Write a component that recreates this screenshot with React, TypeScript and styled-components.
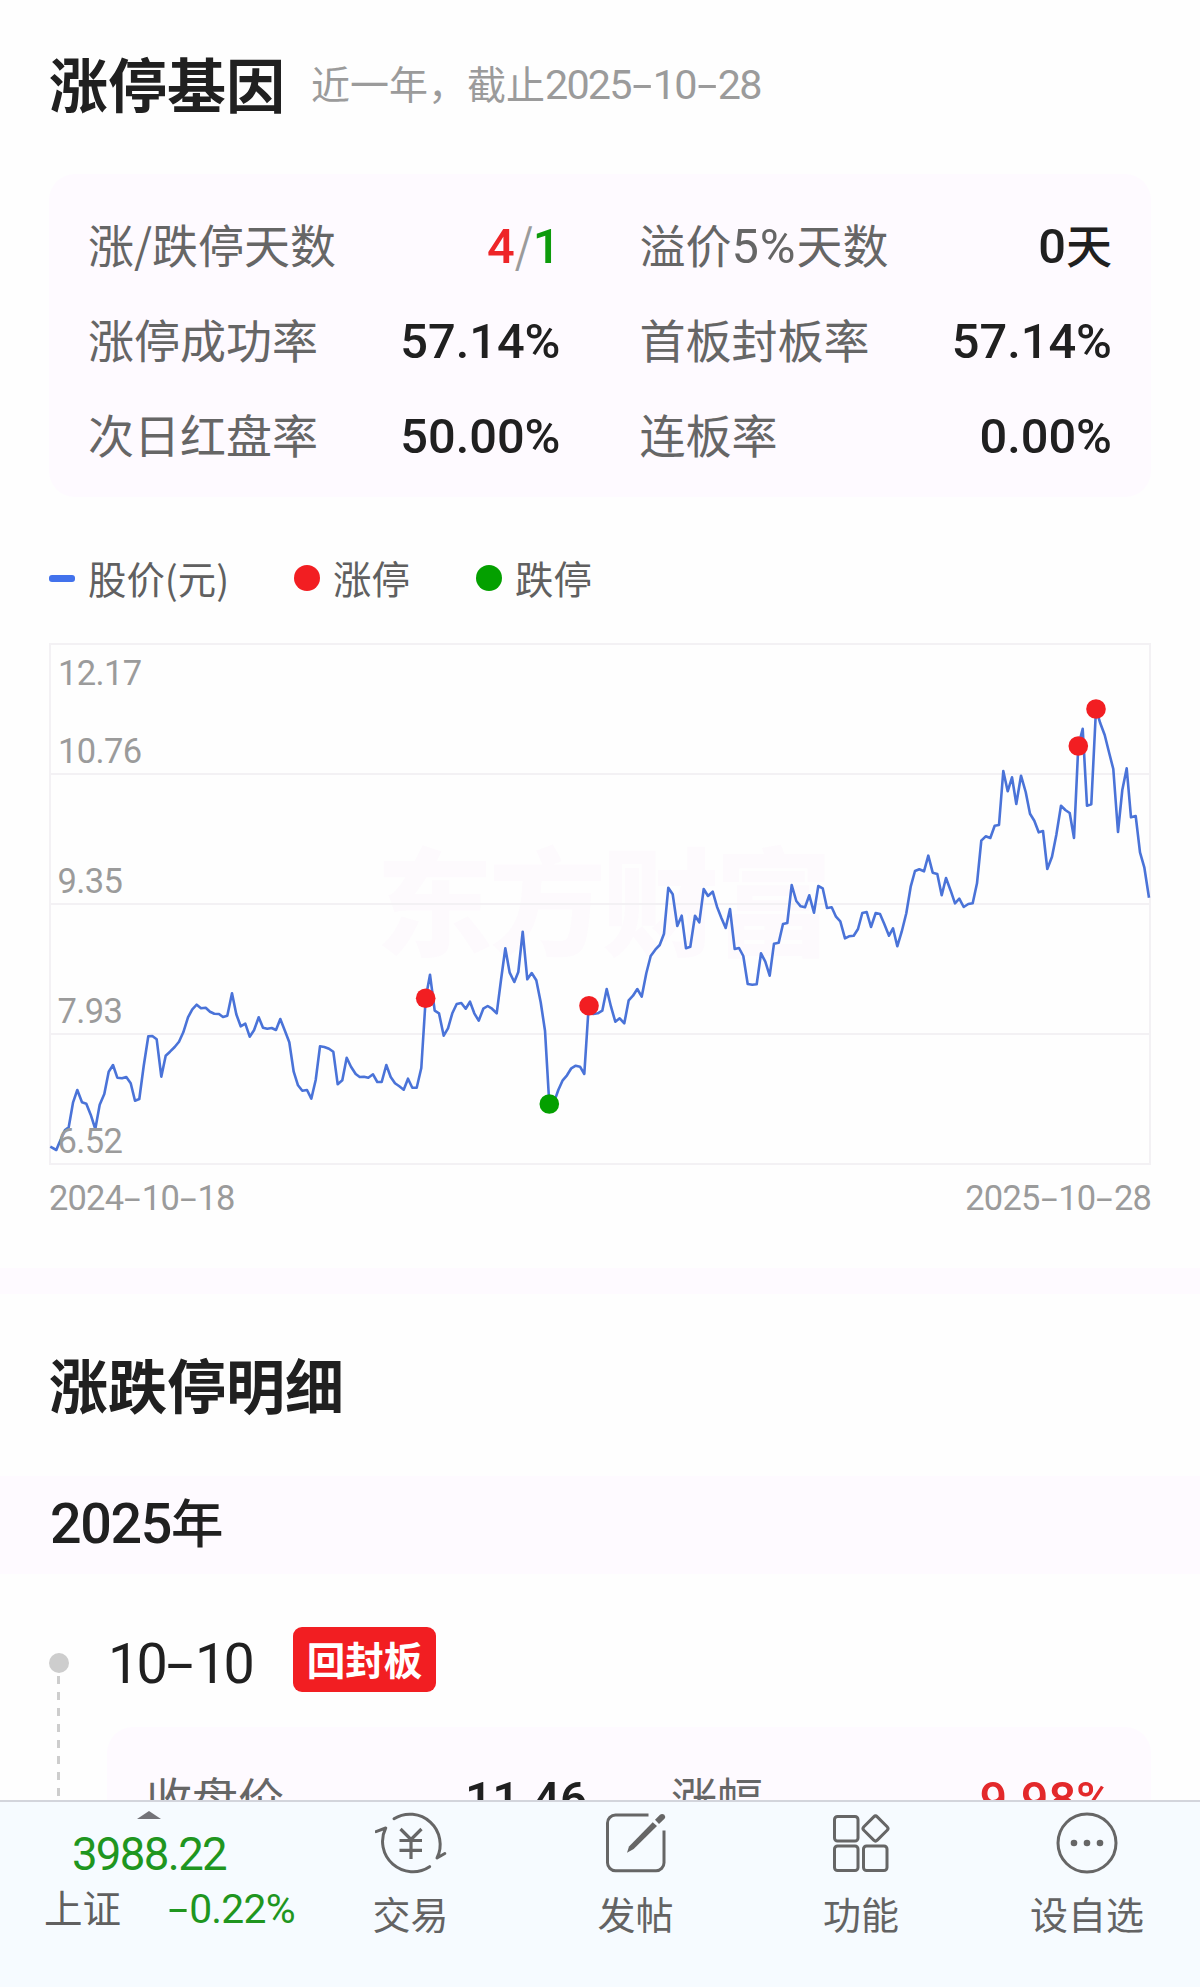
import React from 'react';
import styled, { createGlobalStyle } from 'styled-components';

const RED = '#f21e22';
const GREEN = '#04a000';

const GlobalStyle = createGlobalStyle`
  * { box-sizing: border-box; }
  body {
    margin: 0;
    background: #fefefe;
    color: #202020;
    font-family: 'Noto Sans CJK SC', 'Noto Sans', sans-serif;
  }
`;

const Page = styled.div`
  display: flex;
  flex-direction: column;
  width: 1200px;
  height: 1987px;
  overflow: hidden;
`;

const Content = styled.main`
  flex: 1;
  min-height: 0;
  overflow: hidden;
`;

const Inset = styled.section`
  padding: 0 49px;
`;

/* ---- numerals ---- */

const Digits = styled.span<{ $tight?: number }>`
  font-family: Roboto, sans-serif;
  font-size: 1.06em;
  line-height: 0;
  letter-spacing: ${(p) => p.$tight ?? 0}em;
`;

const Dash = styled.span`
  display: inline-block;
  width: 0.54em;
  text-align: center;
  letter-spacing: 0;
  transform: scaleX(1.75);
`;

function Num({ children, tight }: { children: string; tight?: number }) {
  return (
    <Digits $tight={tight}>
      {children.split(/(-)/).map((part, i) => (part === '-' ? <Dash key={i}>-</Dash> : part))}
    </Digits>
  );
}

/* ---- header ---- */

const Header = styled.header`
  display: flex;
  align-items: center;
  gap: 26px;
  height: 174px;
  padding-bottom: 6px;
  line-height: 1;
`;

const Title = styled.h1`
  margin: 0;
  padding-bottom: 4px;
  font-size: 59px;
  font-weight: 700;
  line-height: 1;
`;

const Subtitle = styled.span`
  padding-bottom: 4px;
  font-size: 39px;
  color: #9b9b9b;
  white-space: nowrap;
`;

/* ---- stat cards ---- */

const StatCard = styled.div<{ $gap?: number }>`
  display: grid;
  grid-template-columns: 1fr 1fr;
  grid-auto-rows: 95px;
  column-gap: ${(p) => p.$gap ?? 79}px;
  height: 323px;
  padding: 21px 39px 0;
  border-radius: 26px;
  background: #fefaff;
`;

const Stat = styled.div`
  display: flex;
  align-items: center;
  justify-content: space-between;
  line-height: 1;
  white-space: nowrap;
`;

const StatLabel = styled.span`
  font-size: 46px;
  color: #666;
`;

const StatValue = styled.span<{ $color?: string }>`
  font-size: 46px;
  font-weight: 500;
  color: ${(p) => p.$color ?? '#202020'};
`;

const Tint = styled.span<{ $color: string; $weight?: number }>`
  color: ${(p) => p.$color};
  font-weight: ${(p) => p.$weight ?? 500};
`;

/* ---- legend and chart ---- */

const Legend = styled.div`
  display: flex;
  align-items: center;
  height: 146px;
  padding-top: 16px;
`;

const LegendItem = styled.div<{ $width: number }>`
  display: flex;
  align-items: center;
  gap: 13px;
  width: ${(p) => p.$width}px;
  font-size: 38.4px;
  line-height: 1;
  color: #606060;
  white-space: nowrap;
`;

const LegendText = styled.span`
  padding-bottom: 2px;
`;

const Dot = styled.i<{ $color: string }>`
  width: 26px;
  height: 26px;
  border-radius: 50%;
  background: ${(p) => p.$color};
`;

const LineMark = styled.i`
  width: 26px;
  height: 7px;
  border-radius: 3px;
  background: #4272ec;
`;

const ChartSvg = styled.svg`
  display: block;
`;

const AxisText = styled.text`
  font: 400 34.5px Roboto, sans-serif;
  letter-spacing: -0.6px;
  fill: #9b9b9b;
`;

const Watermark = styled.text`
  font: 900 117px 'Noto Sans CJK SC', sans-serif;
  letter-spacing: -4px;
  fill: #fdfafd;
`;

const Dates = styled.div`
  display: flex;
  justify-content: space-between;
  align-items: center;
  height: 64px;
  margin-bottom: 39px;
  padding-top: 2px;
  font-size: 32.5px;
  line-height: 1;
  color: #9b9b9b;
`;

// Coordinates are [x, y] inside the 1102 x 522 plot, split by stretch of the year.
const scaled = (ox: number, oy: number, raw: number[]) => {
  const out: string[] = [];
  for (let i = 0; i < raw.length; i += 2) {
    out.push(`${(ox + raw[i] / 3).toFixed(1)},${(oy + raw[i + 1] / 3).toFixed(1)}`);
  }
  return out;
};

const PRICE_LINE = [
  ...scaled(-9, 317, [
    31, 560, 49, 570, 58, 548, 75, 510, 86, 502, 99, 428, 112, 390, 126, 427, 139, 431, 152, 464, 166, 507, 179, 434,
    193, 402, 206, 335, 219, 315, 232, 353, 246, 355, 259, 351, 272, 370, 285, 422, 298, 417, 311, 318, 325, 229, 337,
    228, 350, 238, 364, 350, 377, 287, 390, 275, 404, 261, 417, 245, 430, 217, 444, 172, 457, 148, 470, 134, 483, 145,
    497, 143, 510, 155, 523, 161, 537, 162, 549, 171, 562, 167, 576, 100, 589, 163, 602, 199, 616, 191, 629, 230, 642,
    211, 656, 172, 669, 203, 682, 206, 695, 204, 708, 210, 721, 177, 735, 213, 748, 247, 761, 335, 774, 376, 787, 392,
    801, 390, 814, 416, 827, 360,
  ]),
  ...scaled(241, 297, [
    90, 319, 103, 321, 117, 326, 130, 335, 143, 433, 157, 421, 170, 353, 183, 380, 197, 402, 209, 411, 222, 410, 235,
    413, 249, 403, 262, 426, 275, 426, 289, 375, 302, 411, 315, 430, 328, 439, 341, 449, 354, 416, 367, 443, 380, 443,
    394, 384, 407, 175, 420, 104, 434, 212, 447, 220, 461, 287, 474, 265, 487, 220, 500, 192, 514, 189, 527, 206, 540,
    185, 553, 220, 566, 242, 580, 206, 593, 198, 606, 206, 620, 220, 633, 120, 646, 25, 659, 98, 673, 126, 685, 96,
    698, -25, 712, 118, 725, 99, 739, 121, 752, 187, 765, 272, 778, 492, 798, 470, 805, 450, 818, 421, 831, 406, 844,
    385, 857, 377, 870, 380, 883, 402, 896, 198, 910, 222, 923, 220,
  ]),
  ...scaled(551, 197, [
    7, 512, 20, 447, 33, 500, 46, 545, 59, 535, 73, 550, 86, 481, 99, 467, 112, 447, 125, 470, 139, 400, 152, 348, 166,
    329, 179, 315, 192, 281, 205, 143, 218, 163, 232, 258, 245, 227, 258, 325, 271, 320, 285, 227, 298, 247, 311, 147,
    324, 168, 338, 155, 351, 200, 364, 233, 377, 264, 390, 207, 404, 327, 417, 324, 430, 348, 443, 432, 457, 434, 470,
    433, 483, 340, 496, 365, 509, 407, 522, 311, 536, 308, 549, 252, 562, 249, 575, 135, 589, 183, 602, 199, 615, 202,
    628, 166, 642, 218, 655, 138, 668, 145, 681, 204, 695, 202, 708, 230, 721, 244, 735, 295, 747, 289, 761, 287, 774,
    267, 787, 219, 800, 216, 813, 261, 827, 219, 840, 222, 853, 252, 867, 287, 879, 265, 892, 319, 905, 275, 919, 220,
    932, 140, 945, 93, 958, 88, 972, 94,
  ]),
  ...scaled(831, 17, [
    145, 587, 158, 638, 172, 642, 185, 706, 198, 654, 212, 692, 225, 730, 238, 716, 251, 741, 265, 732, 278, 730, 291,
    670, 304, 542, 317, 529, 331, 534, 344, 497, 357, 495, 370, 333, 383, 394, 396, 352, 409, 432, 423, 347, 437, 396,
    450, 461, 463, 482, 476, 517, 489, 513, 502, 627, 516, 590, 529, 525, 543, 437, 556, 450, 569, 459, 582, 534, 595,
    258, 608, 206, 621, 437, 634, 433, 648, 147, 661, 190, 674, 225, 687, 277, 700, 327, 714, 516, 727, 390, 740, 325,
    753, 472, 767, 468, 780, 577, 793, 622, 807, 713,
  ]),
].join(' ');

const AXIS: [string, number, number][] = [
  ['12.17', 9, 42],
  ['10.76', 9, 120],
  ['9.35', 8.5, 250],
  ['7.93', 8.5, 380],
  ['6.52', 8.5, 510],
];

const EVENTS: [number, number, string][] = [
  [376.7, 355.3, RED],
  [540, 362.7, RED],
  [500.3, 461, GREEN],
  [1029.3, 103, RED],
  [1047, 66, RED],
];

function PriceChart() {
  return (
    <ChartSvg width="1102" height="522" viewBox="0 0 1102 522">
      <Watermark x="327" y="304">
        东方财富
      </Watermark>
      <g fill="none" stroke="#f3f1f4" strokeWidth="2">
        <rect x="1" y="1" width="1100" height="520" />
        <path d="M1 131H1101M1 261H1101M1 391H1101" />
      </g>
      <polyline points={PRICE_LINE} fill="none" stroke="#4a73d8" strokeWidth="2.6" strokeLinejoin="round" />
      {EVENTS.map(([x, y, c]) => (
        <circle key={x} cx={x} cy={y} r="9.8" fill={c} />
      ))}
      {AXIS.map(([t, x, y]) => (
        <AxisText key={t} x={x} y={y}>
          {t}
        </AxisText>
      ))}
    </ChartSvg>
  );
}

/* ---- detail list ---- */

const Divider = styled.div`
  height: 26px;
  background: #fefaff;
`;

const SectionHead = styled.div`
  display: flex;
  align-items: center;
  height: 182px;
  padding-left: 49px;
`;

const YearBar = styled.div`
  display: flex;
  align-items: center;
  height: 98px;
  padding: 0 0 10px 50px;
  background: #fefaff;
  font-size: 52.5px;
  font-weight: 500;
  line-height: 1;
`;

const Entry = styled.article`
  display: flex;
  padding: 53px 49px 0;
`;

const Rail = styled.div`
  display: flex;
  flex-direction: column;
  align-items: center;
  width: 20px;
  margin-right: 38px;
  padding-top: 26px;
`;

const RailDot = styled.i`
  width: 20px;
  height: 20px;
  border-radius: 50%;
  background: #cdcdcd;
`;

const RailLine = styled.i`
  flex: 1;
  width: 3px;
  margin: 3px 1px 0 0;
  background: repeating-linear-gradient(#cdcdcd 0 8px, transparent 8px 16px);
`;

const EntryBody = styled.div`
  flex: 1;
`;

const EntryHead = styled.div`
  display: flex;
  align-items: center;
  height: 65px;
  margin-bottom: 35px;
`;

const EntryDate = styled.div`
  width: 186px;
  padding: 2px 0 0 1px;
  font-size: 52.5px;
  font-weight: 400;
  line-height: 1;
`;

const Badge = styled.span`
  display: flex;
  align-items: center;
  justify-content: center;
  width: 143px;
  height: 65px;
  padding-bottom: 2px;
  border-radius: 9px;
  background: ${RED};
  color: #fff;
  font-size: 38.5px;
  font-weight: 700;
  line-height: 1;
`;

/* ---- bottom bar ---- */

const BottomBar = styled.footer`
  display: grid;
  grid-template-columns: 298px 225px 225px 226px 226px;
  height: 187px;
  border-top: 2px solid #d3d5dc;
  background: #f6fbff;
`;

const IndexCell = styled.div`
  display: flex;
  flex-direction: column;
  align-items: center;
  padding-top: 9px;
  line-height: 1;
  white-space: nowrap;
`;

const Caret = styled.i`
  border: 12px solid transparent;
  border-top-width: 0;
  border-bottom: 8px solid #737378;
`;

const IndexPrice = styled.div`
  margin-top: 11px;
  font-size: 43px;
  color: #1f961f;
`;

const IndexRow = styled.div`
  display: flex;
  align-items: center;
  gap: 46px;
  margin-top: 14px;
  padding-left: 41px;
  font-size: 38.5px;
  color: #606060;
`;

const NavItem = styled.button`
  display: flex;
  flex-direction: column;
  align-items: center;
  gap: 15px;
  padding: 5px 0 0;
  border: 0;
  background: none;
  color: #636363;
  font: 400 38px/1 'Noto Sans CJK SC', sans-serif;
`;

const NavIcon = styled.svg.attrs({
  width: 72,
  height: 72,
  viewBox: '0 0 72 72',
  fill: 'none',
  stroke: '#666',
  strokeWidth: 3,
  strokeLinecap: 'round',
  strokeLinejoin: 'round',
})`
  display: block;
`;

function Row({ label, children, color }: { label: React.ReactNode; children: React.ReactNode; color?: string }) {
  return (
    <Stat>
      <StatLabel>{label}</StatLabel>
      <StatValue $color={color}>{children}</StatValue>
    </Stat>
  );
}

export default function App() {
  return (
    <Page>
      <GlobalStyle />
      <Content>
        <Inset>
          <Header>
            <Title>涨停基因</Title>
            <Subtitle>
              近一年，截止<Num tight={-0.045}>2025-10-28</Num>
            </Subtitle>
          </Header>
          <StatCard>
            <Row label="涨/跌停天数">
              <Tint $color="#ee2528">
                <Num>4</Num>
              </Tint>
              <Tint $color="#9b9b9b" $weight={400}>
                /
              </Tint>
              <Tint $color="#0e9b0c">
                <Num>1</Num>
              </Tint>
            </Row>
            <Row
              label={
                <>
                  溢价<Num tight={0.02}>5%</Num>天数
                </>
              }
            >
              <Num>0</Num>天
            </Row>
            <Row label="涨停成功率">
              <Num>57.14%</Num>
            </Row>
            <Row label="首板封板率">
              <Num>57.14%</Num>
            </Row>
            <Row label="次日红盘率">
              <Num>50.00%</Num>
            </Row>
            <Row label="连板率">
              <Num>0.00%</Num>
            </Row>
          </StatCard>
          <Legend>
            <LegendItem $width={245}>
              <LineMark />
              <LegendText>股价(元)</LegendText>
            </LegendItem>
            <LegendItem $width={182}>
              <Dot $color={RED} />
              <LegendText>涨停</LegendText>
            </LegendItem>
            <LegendItem $width={182}>
              <Dot $color={GREEN} />
              <LegendText>跌停</LegendText>
            </LegendItem>
          </Legend>
          <PriceChart />
          <Dates>
            <Num tight={-0.023}>2024-10-18</Num>
            <Num tight={-0.023}>2025-10-28</Num>
          </Dates>
        </Inset>
        <Divider />
        <SectionHead>
          <Title as="h2">涨跌停明细</Title>
        </SectionHead>
        <YearBar>
          <span>
            <Num tight={-0.025}>2025</Num>年
          </span>
        </YearBar>
        <Entry>
          <Rail>
            <RailDot />
            <RailLine />
          </Rail>
          <EntryBody>
            <EntryHead>
              <EntryDate>
                <Num tight={-0.05}>10-10</Num>
              </EntryDate>
              <Badge>回封板</Badge>
            </EntryHead>
            <StatCard $gap={84}>
              <Row label="收盘价">
                <Num tight={-0.01}>11.46</Num>
              </Row>
              <Row label="涨幅" color="#e3282b">
                <Num>9.98%</Num>
              </Row>
            </StatCard>
          </EntryBody>
        </Entry>
      </Content>
      <BottomBar>
        <IndexCell>
          <Caret />
          <IndexPrice>
            <Num tight={-0.036}>3988.22</Num>
          </IndexPrice>
          <IndexRow>
            上证
            <Tint $color="#1f961f" $weight={400}>
              <Num tight={-0.018}>-0.22%</Num>
            </Tint>
          </IndexRow>
        </IndexCell>
        <NavItem>
          <NavIcon>
            <path d="M19 11.700A30.300 30.300 0 0 1 62 51L69.800 46.500" />
            <path d="M54.600 59.700A30.300 30.300 0 0 1 10.700 21L1 24.600" />
            <path strokeLinecap="butt" strokeWidth="3.200" d="M25.500 22L36 32.500L46.500 22M36 32V52M24.500 33.500H47M24.500 43.300H47" />
          </NavIcon>
          交易
        </NavItem>
        <NavItem>
          <NavIcon>
            <path strokeLinecap="butt" d="M48.500 8H15.500a8 8 0 0 0-8 8v39.700a8 8 0 0 0 8 8h40.500a8 8 0 0 0 8-8V23.500" />
            <path d="M27 45.800L29 39.500L52.700 15.200L57 19L33.700 42Z" fill="#666" stroke="none" />
            <path d="M55 12.800L60 7.800Q62 6 64.300 7.800Q66 9.800 64.500 11.800L59 17Z" fill="#666" stroke="none" />
          </NavIcon>
          发帖
        </NavItem>
        <NavItem>
          <NavIcon>
            <rect x="9.500" y="9.500" width="23.500" height="24.500" rx="3" />
            <rect x="9.500" y="39" width="23.500" height="24.500" rx="3" />
            <rect x="38.500" y="39" width="23.500" height="24.500" rx="3" />
            <rect x="41" y="12" width="19" height="19" rx="2.500" transform="rotate(45 50.500 21.500)" />
          </NavIcon>
          功能
        </NavItem>
        <NavItem>
          <NavIcon>
            <circle cx="36" cy="36" r="29" />
            <g fill="#666" stroke="none">
              <circle cx="23" cy="36" r="3.300" />
              <circle cx="36" cy="36" r="3.300" />
              <circle cx="49" cy="36" r="3.300" />
            </g>
          </NavIcon>
          设自选
        </NavItem>
      </BottomBar>
    </Page>
  );
}
